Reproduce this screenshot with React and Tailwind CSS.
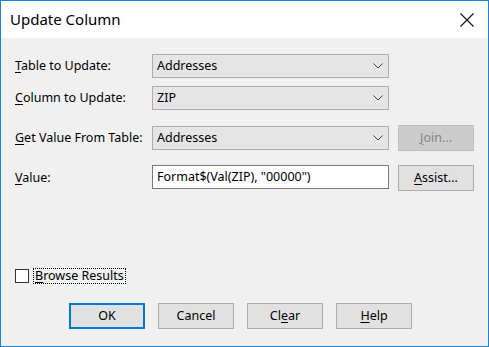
import React from "react";

const font = { fontFamily: '"Noto Sans", "Open Sans", sans-serif' };

function U({ children }) {
  return <span className="underline underline-offset-2">{children}</span>;
}

function Chevron() {
  return (
    <svg width="10" height="6" viewBox="0 0 10 6" className="shrink-0">
      <path d="M0.5 0.5 L5 5 L9.5 0.5" fill="none" stroke="#3c3c3c" strokeWidth="1" />
    </svg>
  );
}

function Combo({ value }) {
  return (
    <div className="w-[237px] h-[24px] border border-[#adadad] bg-[#e5e5e5] flex items-center justify-between pl-[4px] pr-[5px] text-[12.5px] text-black">
      <span>{value}</span>
      <Chevron />
    </div>
  );
}

function Btn({ children, disabled, def }) {
  const base = "w-[76px] h-[26px] flex items-center justify-center text-[12.5px]";
  if (disabled)
    return <div className={`${base} border border-[#bfbfbf] bg-[#cccccc] text-[#838383]`}>{children}</div>;
  if (def)
    return <div className={`${base} border-2 border-[#0078d7] bg-[#e1e1e1] text-black`}>{children}</div>;
  return <div className={`${base} border border-[#adadad] bg-[#e1e1e1] text-black`}>{children}</div>;
}

function Label({ children }) {
  return <div className="w-[137px] text-[12.5px] text-black">{children}</div>;
}

export default function App() {
  return (
    <div style={font} className="w-[489px] h-[347px] border border-[#1883d7] flex flex-col bg-white">
      <div className="h-[37px] bg-white flex items-center justify-between pl-[9px] pr-[14px]">
        <span className="text-[15px] text-black">Update Column</span>
        <svg width="14" height="14" viewBox="0 0 14 14">
          <path d="M0.5 0.5 L13.5 13.5 M13.5 0.5 L0.5 13.5" stroke="#111" strokeWidth="1.1" />
        </svg>
      </div>
      <div className="flex-1 bg-[#f0f0f0] pl-[14px] pt-[16px] flex flex-col">
        <div className="flex items-center h-[24px]">
          <Label><U>T</U>able to Update:</Label>
          <Combo value="Addresses" />
        </div>
        <div className="flex items-center h-[24px] mt-[8px]">
          <Label><U>C</U>olumn to Update:</Label>
          <Combo value="ZIP" />
        </div>
        <div className="flex items-center h-[26px] mt-[15px]">
          <Label><U>G</U>et Value From Table:</Label>
          <Combo value="Addresses" />
          <div className="ml-[9px]">
            <Btn disabled><U>J</U>oin...</Btn>
          </div>
        </div>
        <div className="flex items-center h-[26px] mt-[14px]">
          <Label><U>V</U>alue:</Label>
          <div className="w-[237px] h-[24px] border border-[#7a7a7a] bg-white flex items-center pl-[4px] text-[12.5px] text-black self-start">
            Format$(Val(ZIP), "00000")
          </div>
          <div className="ml-[9px]">
            <Btn><U>A</U>ssist...</Btn>
          </div>
        </div>
        <div className="flex items-center h-[16px] mt-[77px]">
          <div className="w-[14px] h-[14px] border border-[#333] bg-white" />
          <div className="ml-[4px] px-[1px] border border-dotted border-black text-[12.5px] text-black leading-[14px]">
            <U>B</U>rowse Results
          </div>
        </div>
        <div className="flex mt-[19px] pl-[54px] gap-[13px]">
          <Btn def>OK</Btn>
          <Btn>Cancel</Btn>
          <Btn>Cl<U>e</U>ar</Btn>
          <Btn><U>H</U>elp</Btn>
        </div>
      </div>
    </div>
  );
}
